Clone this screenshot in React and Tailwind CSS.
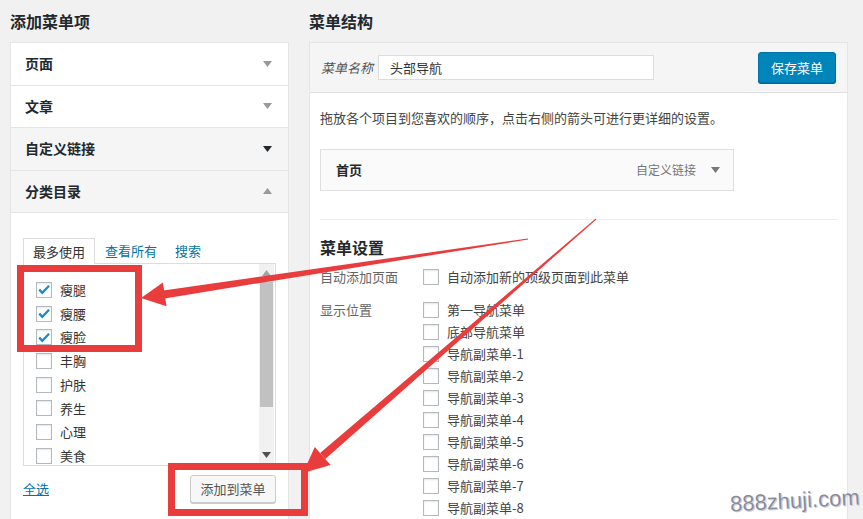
import React from 'react';

const Tri = ({ up, color = '#999' }) => (
  <svg width="9" height="6" viewBox="0 0 9 6">
    <path d={up ? 'M0 6h9L4.5 0z' : 'M0 0h9L4.5 6z'} fill={color} />
  </svg>
);

const Box = ({ checked }) => (
  <span className="w-4 h-4 shrink-0 border border-[#b4b9be] bg-white shadow-[inset_0_1px_2px_rgba(0,0,0,0.1)] flex items-center justify-center">
    {checked && (
      <svg viewBox="0 0 16 16" className="w-[15px] h-[15px]">
        <path d="M2.5 8.2l3.6 3.6L13.8 3.8" stroke="#1e8cbe" strokeWidth="2.6" fill="none" />
      </svg>
    )}
  </span>
);

const sections = [
  { name: '页面', bg: 'bg-white', color: '#999', up: false },
  { name: '文章', bg: 'bg-white', color: '#999', up: false },
  { name: '自定义链接', bg: 'bg-[#f5f5f5]', color: '#23282d', up: false },
  { name: '分类目录', bg: 'bg-[#f5f5f5]', color: '#999', up: true },
];

const cats = [
  ['瘦腿', true],
  ['瘦腰', true],
  ['瘦脸', true],
  ['丰胸', false],
  ['护肤', false],
  ['养生', false],
  ['心理', false],
  ['美食', false],
];

const locations = [
  '第一导航菜单',
  '底部导航菜单',
  '导航副菜单-1',
  '导航副菜单-2',
  '导航副菜单-3',
  '导航副菜单-4',
  '导航副菜单-5',
  '导航副菜单-6',
  '导航副菜单-7',
  '导航副菜单-8',
];

export default function App() {
  return (
    <div className="relative w-[863px] h-[519px] overflow-hidden bg-[#f1f1f1] text-[#444] font-['Noto_Sans_CJK_SC',sans-serif]">
      <div className="flex pl-[10px] gap-[20px]">
        {/* left column */}
        <div className="w-[279px] shrink-0">
          <h2 className="h-[42px] flex items-center text-[16px] font-bold text-[#23282d]">添加菜单项</h2>
          <div className="bg-white border border-[#e5e5e5] h-[490px]">
            {sections.map((s) => (
              <div
                key={s.name}
                className={`h-[42.5px] border-b border-[#e5e5e5] flex items-center justify-between pl-[14px] pr-[16px] ${s.bg}`}
              >
                <span className="text-[14px] font-bold text-[#23282d]">{s.name}</span>
                <Tri up={s.up} color={s.color} />
              </div>
            ))}
            <div className="px-[12px] pt-[25px]">
              <div className="flex items-end h-[25px] text-[13px]">
                <span className="relative z-10 -mb-px h-[26px] px-[9px] border border-b-0 border-[#ddd] bg-white flex items-center text-[#333]">
                  最多使用
                </span>
                <span className="ml-[10px] h-[25px] flex items-center text-[#0073aa]">查看所有</span>
                <span className="ml-[18px] h-[25px] flex items-center text-[#0073aa]">搜索</span>
              </div>
              <div className="h-[203px] border border-[#ddd] bg-white flex">
                <div className="flex-1 pl-[12px] pt-[14px] overflow-hidden">
                  {cats.map(([c, on]) => (
                    <div key={c} className="h-[23.7px] flex items-center gap-[8px] text-[13px] text-[#333]">
                      <Box checked={on} />
                      <span>{c}</span>
                    </div>
                  ))}
                </div>
                <div className="w-[15px] mr-[1px] bg-[#f1f1f1] flex flex-col">
                  <div className="h-[18px] flex items-center justify-center">
                    <Tri up color="#a3a3a3" />
                  </div>
                  <div className="h-[125px] mx-[1px] bg-[#c1c1c1]" />
                  <div className="flex-1" />
                  <div className="h-[20px] flex items-center justify-center">
                    <Tri color="#505050" />
                  </div>
                </div>
              </div>
              <div className="mt-[9px] flex items-center justify-between">
                <span className="text-[13px] text-[#0073aa] underline">全选</span>
                <button className="w-[86px] h-[28px] border border-[#ccc] bg-[#f7f7f7] rounded-[3px] shadow-[0_1px_0_#ccc] text-[13px] text-[#555]">
                  添加到菜单
                </button>
              </div>
            </div>
          </div>
        </div>

        {/* right column */}
        <div className="w-[539px] shrink-0">
          <h2 className="h-[42px] flex items-center text-[16px] font-bold text-[#23282d]">菜单结构</h2>
          <div className="bg-white border border-[#e5e5e5] h-[490px]">
            <div className="h-[50px] bg-[#f5f5f5] border-b border-[#dfdfdf] flex items-center px-[11px]">
              <span className="w-[57px] italic text-[13px] text-[#555]">菜单名称</span>
              <div className="w-[276px] h-[25px] border border-[#ddd] bg-white px-[11px] flex items-center text-[13px] text-[#333]">
                头部导航
              </div>
              <button className="ml-auto w-[78px] h-[31px] bg-[#0085ba] border border-[#0073aa] rounded-[3px] shadow-[0_1px_0_#006799] text-white text-[13px]">
                保存菜单
              </button>
            </div>
            <div className="px-[10px] pt-[15px]">
              <p className="leading-[20px] text-[13px] text-[#444]">
                拖放各个项目到您喜欢的顺序，点击右侧的箭头可进行更详细的设置。
              </p>
              <div className="mt-[21px] w-[414px] h-[42px] border border-[#dfdfdf] bg-[#fafafa] flex items-center pl-[15px] pr-[13px]">
                <span className="text-[13px] font-bold text-[#23282d]">首页</span>
                <span className="ml-auto text-[12px] text-[#777]">自定义链接</span>
                <span className="ml-[15px]">
                  <Tri color="#777" />
                </span>
              </div>
              <div className="mt-[28px] border-t border-[#eee]" />
              <h3 className="mt-[15px] h-[24px] leading-[24px] text-[16px] font-bold text-[#23282d]">菜单设置</h3>
              <div className="mt-[7px] h-[22px] flex items-center text-[13px]">
                <span className="w-[103px] text-[#666]">自动添加页面</span>
                <Box />
                <span className="ml-[8px] text-[#444]">自动添加新的顶级页面到此菜单</span>
              </div>
              <div className="mt-[11px] flex text-[13px]">
                <span className="w-[103px] h-[22px] flex items-center text-[#666]">显示位置</span>
                <div>
                  {locations.map((l) => (
                    <div key={l} className="h-[22px] flex items-center">
                      <Box />
                      <span className="ml-[8px] text-[#444]">{l}</span>
                    </div>
                  ))}
                </div>
              </div>
            </div>
          </div>
        </div>
      </div>

      {/* annotation overlay */}
      <svg className="absolute left-0 top-0 pointer-events-none" width="863" height="519" viewBox="0 0 863 519">
        <rect x="20.5" y="268.5" width="118" height="80" fill="none" stroke="#e93c3c" strokeWidth="7" />
        <rect x="171.5" y="466.5" width="133" height="46" fill="none" stroke="#e93c3c" strokeWidth="7" />
        <polygon points="163.4,290.4 527.9,238.5 528.1,239.5 164.6,298.4" fill="#e93c3c" />
        <polygon points="141,298 162.9,282.5 166.5,306.3" fill="#e93c3c" />
        <polygon points="320.1,453 595.7,218.6 596.3,219.4 325.3,459" fill="#e93c3c" />
        <polygon points="303,473 314.8,446.9 330.6,465.1" fill="#e93c3c" />
      </svg>

      <div className="absolute left-[730px] top-[484px] -rotate-3 text-[22px] font-['Liberation_Sans',sans-serif] text-[#8b8b98] [text-shadow:0_0_1px_#fff,1px_1px_0_#c9c9d6]">
        888zhuji.com
      </div>
    </div>
  );
}
